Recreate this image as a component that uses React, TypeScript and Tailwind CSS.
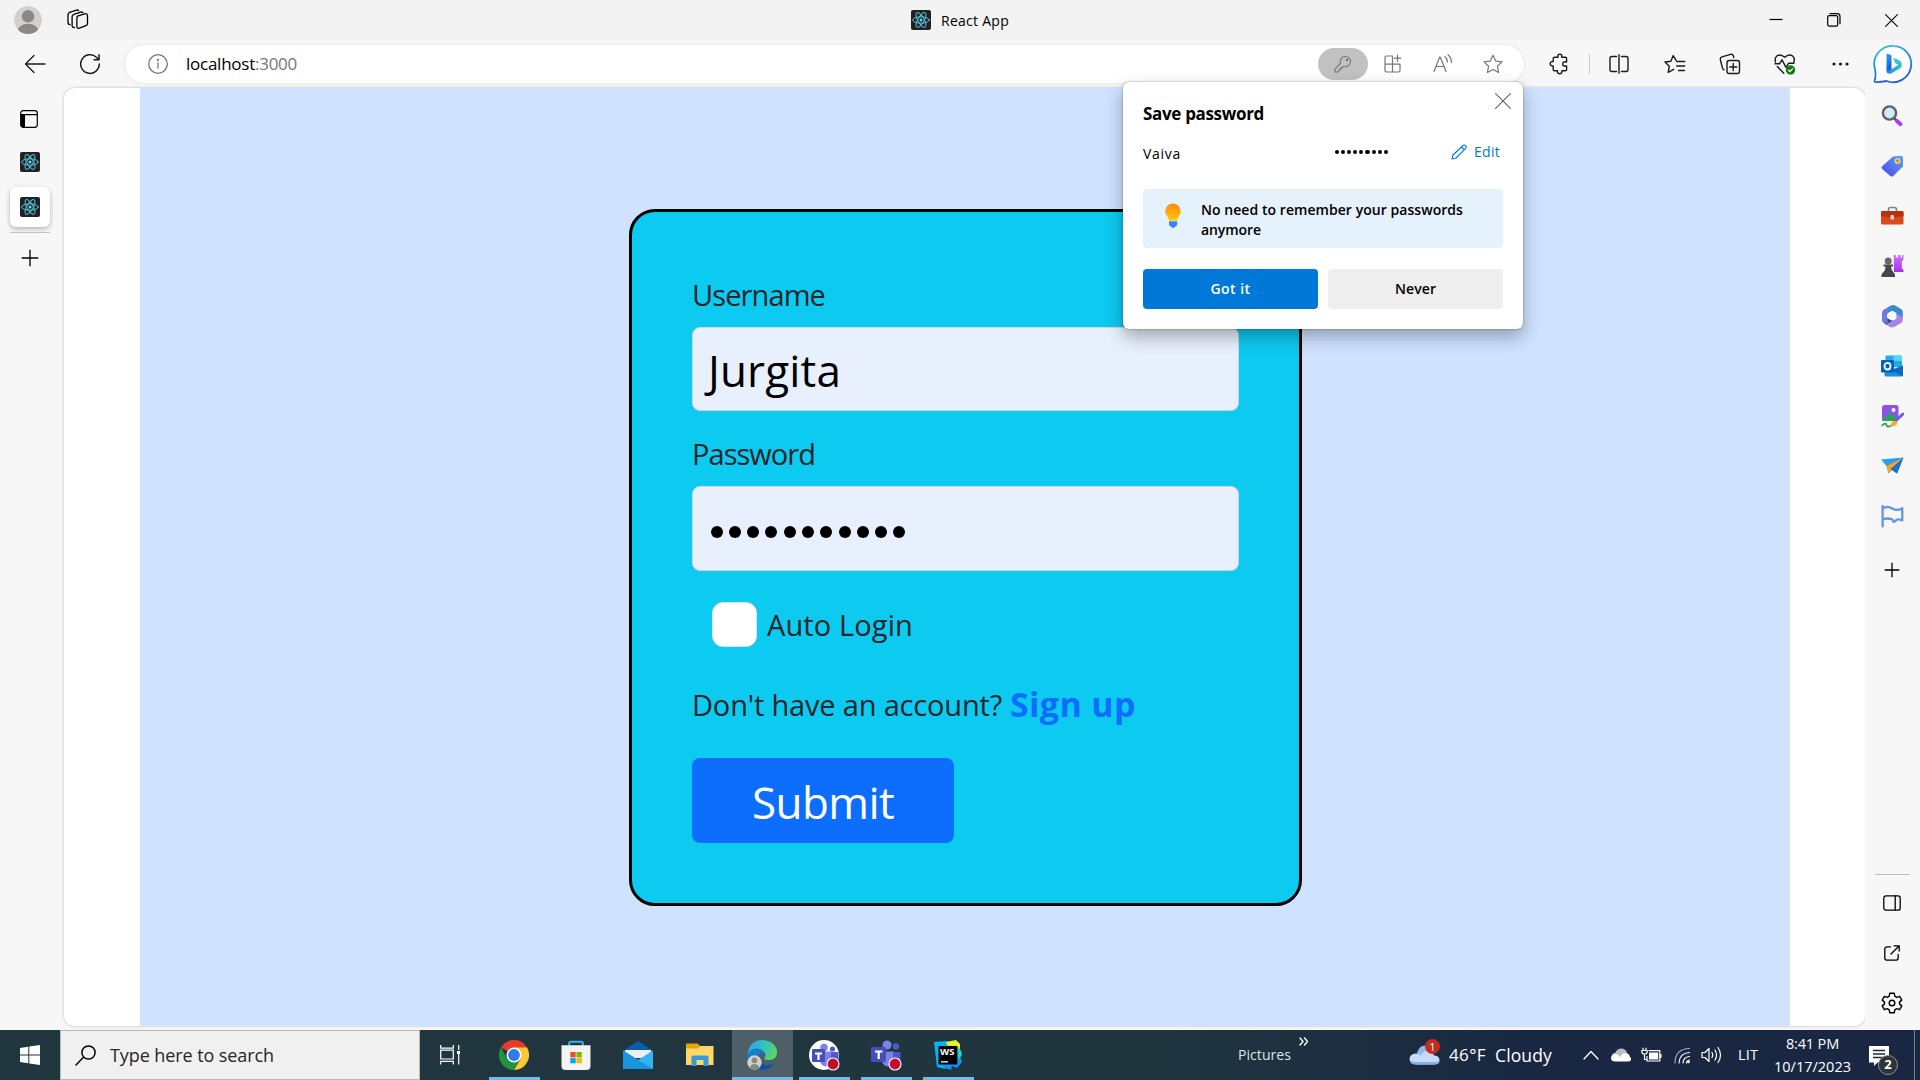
import { useLayoutEffect, useRef, useState, type ReactNode } from "react";

/** Single line of text whose tracking is adjusted so that it spans `width` pixels. */
function Fit({ children, width, className = "" }: { children: string; width: number; className?: string }) {
  const ref = useRef<HTMLSpanElement>(null);
  const [spacing, setSpacing] = useState(0);
  useLayoutEffect(() => {
    const el = ref.current;
    if (el) setSpacing((width - el.getBoundingClientRect().width) / children.length);
  }, [children, width]);
  return (
    <span ref={ref} className={`inline-block shrink-0 whitespace-pre ${className}`} style={{ letterSpacing: `${spacing}px` }}>
      {children}
    </span>
  );
}

type IconProps = { w?: number; h?: number; sw?: number; className?: string; children: ReactNode };
function Icon({ w = 20, h = 20, sw = 1.3, className = "", children }: IconProps) {
  return (
    <svg width={w} height={h} viewBox={`0 0 ${w} ${h}`} fill="none" stroke="currentColor" strokeWidth={sw} strokeLinecap="round" strokeLinejoin="round" className={`shrink-0 ${className}`}>
      {children}
    </svg>
  );
}

function ReactLogo() {
  return (
    <Icon sw={1} className="text-[#53c1de]">
      <rect width="20" height="20" rx="2" fill="#222" stroke="none" />
      <ellipse cx="10" cy="10" rx="8.3" ry="3.2" />
      <ellipse cx="10" cy="10" rx="8.3" ry="3.2" transform="rotate(60 10 10)" />
      <ellipse cx="10" cy="10" rx="8.3" ry="3.2" transform="rotate(120 10 10)" />
      <circle cx="10" cy="10" r="1.5" fill="#61dafb" stroke="none" />
    </Icon>
  );
}

function Cross({ size = 14, className = "" }: { size?: number; className?: string }) {
  return (
    <Icon w={size} h={size} sw={1.1} className={className}>
      <path d={`M.6.6 ${size - 0.6} ${size - 0.6}M${size - 0.6}.6.6 ${size - 0.6}`} />
    </Icon>
  );
}

function TitleBar() {
  return (
    <header className="relative flex h-10 shrink-0 items-center bg-[#f3f3f3] pl-3.5">
      <Icon w={28} h={28}>
        <clipPath id="avatar"><circle cx="14" cy="14" r="14" /></clipPath>
        <g clipPath="url(#avatar)" stroke="none">
          <circle cx="14" cy="14" r="14" fill="#d2d0ce" />
          <circle cx="14" cy="10.3" r="6.2" fill="#8a8886" />
          <ellipse cx="14" cy="25" rx="10.5" ry="7.2" fill="#8a8886" />
        </g>
      </Icon>
      <Icon w={22} h={22} sw={1.3} className="ml-[25px]">
        <path d="M10.5 7.2 17.6 4.8q2.900-.6 2.900 2v7.600q0 1.700-1.600 2.300l-6.600 2.500q-2.400.7-2.400-1.800V9.600q0-1.800.6-2.400Z" />
        <path d="M7.500 18.500q-2.400.1-2.400-2.200V7.800q0-1.800 1.800-2.400l6.800-2.300q1.400-.4 2.200.5" />
        <path d="M3 15.700q-2-.2-2-2.200V5.800Q1 4 2.700 3.400L9.500 1.100q1.300-.4 2.100.5" />
      </Icon>
      <div className="absolute left-[911px] top-2.5 flex h-5 items-center">
        <ReactLogo />
        <Fit width={68} className="ml-2.5 mt-px text-[14px] leading-5 text-black">React App</Fit>
      </div>
      <div className="ml-auto mr-[22px] flex items-center gap-11 text-black">
        <Icon w={14} h={14} sw={1.2}><path d="M.5 6.5h13" strokeLinecap="butt" /></Icon>
        <Icon w={14} h={14} sw={1.2}>
          <rect x=".7" y="2.7" width="10" height="10.5" rx="1.6" />
          <path d="M3 .7h7.200q2.800 0 2.800 2.800v7.200" />
        </Icon>
        <Cross size={13} />
      </div>
    </header>
  );
}

const STAR = "M10 1.3l2.700 5.800 6.300.8-4.600 4.300 1.200 6.300L10 15.400l-5.600 3.100 1.200-6.300L1 7.900l6.300-.8z";

function Cell({ children, className }: { children: ReactNode; className: string }) {
  return <div className={`flex h-full shrink-0 items-center justify-center ${className}`}>{children}</div>;
}

function AddressBar() {
  return (
    <div className="flex h-[38px] w-[1399px] shrink-0 items-center rounded-full bg-white pl-[23px] pr-1.5 text-[#767676] shadow-[0_0_3px_rgba(0,0,0,0.12)]">
      <Icon>
        <circle cx="10" cy="10" r="9.3" />
        <path d="M10 9v5" /><circle cx="10" cy="6" r=".5" fill="currentColor" />
      </Icon>
      <div className="ml-[18px] flex text-[17px] leading-6">
        <Fit width={69} className="text-black">localhost</Fit>
        <Fit width={42}>:3000</Fit>
      </div>
      <div className="ml-auto flex h-8 items-center">
        <Cell className="w-[50px] rounded-full bg-[#c1c1c1]">
          <Icon w={18} h={18} sw={1.1}>
            <path d="M6.600 8.300A5.100 5.100 0 1 1 9.800 11.400L8.600 12.600H7v1.800H5.200v1.700L4.200 17H1v-3z" />
            <circle cx="13" cy="5" r=".8" fill="currentColor" />
          </Icon>
        </Cell>
        <Cell className="w-[50px]">
          <Icon sw={1.2}>
            <path d="M9.500 2H3.400Q2 2 2 3.400v13.200Q2 18 3.400 18h12.200q1.400 0 1.400-1.400V10.200H2M9.500 2v16M14.500 1v6.500M11.300 4.200h6.500" />
          </Icon>
        </Cell>
        <Cell className="w-[50px]">
          <Icon sw={1.2}>
            <path d="M1 17.500 6.700 3h.5L13 17.500M3 12.500h8M12 2.700q2.300 2 2.500 5.300M15 .8q3.400 3 3.500 7.700" />
          </Icon>
        </Cell>
        <Cell className="w-[50px]"><Icon sw={1.2}><path d={STAR} /></Icon></Cell>
      </div>
    </div>
  );
}

function BingLogo() {
  return (
    <Icon w={40} h={40} className="relative z-10">
      <defs>
        <linearGradient id="bingRing" x1="0" y1="0" x2=".4" y2="1"><stop stopColor="#22c8f0" /><stop offset="1" stopColor="#2b59d8" /></linearGradient>
        <linearGradient id="bingB" x1="0" y1="0" x2=".3" y2="1"><stop stopColor="#2aa7f2" /><stop offset="1" stopColor="#1b4fd0" /></linearGradient>
        <linearGradient id="bingC" x1="1" y1="0" x2="0" y2="1"><stop stopColor="#39dccb" /><stop offset="1" stopColor="#2385ee" /></linearGradient>
      </defs>
      <path d="M20 1.800A18.200 18.200 0 1 1 13.500 37q-6 1.300-11 1.100Q1.200 38 1.700 36.500q1.400-4.500.4-11A18.200 18.200 0 0 1 20 1.800Z" fill="#fff" stroke="url(#bingRing)" strokeWidth="1.800" />
      <path d="M14 9.500l3.500 1.300q1 .4 1 1.600v13L14.500 29q-1-.8-1-2.500V10z" fill="url(#bingB)" stroke="none" />
      <path d="M13.500 26.500q1 4.500 5 2.700l8.300-4.700q2.500-1.700 2-4.500-.6-3.300-4-4.500l-4.700-1.600 2.300 5.400 3 1.500-7 4.400q-3 2.300-4.900 1.300z" fill="url(#bingC)" stroke="none" />
    </Icon>
  );
}

function Toolbar() {
  return (
    <div className="flex h-12 shrink-0 items-center bg-[#f7f7f7] text-[#1b1b1b]">
      <Icon w={22} className="ml-6"><path d="M21 10H2M10 1.500 1.500 10 10 18.500" /></Icon>
      <Icon w={22} h={22} sw={1.5} className="ml-[33px] mr-6">
        <path d="M20.300 11A9.300 9.300 0 1 1 17.400 4.300l2.200 2.200M20 1.800v5h-5" />
      </Icon>
      <AddressBar />
      <Cell className="ml-2.5 w-[51px]">
        <Icon w={21} h={22} sw={1.4}>
          <path d="M5.500 4.200H9q-.8-3 1.800-3t1.800 3h3.800q1.200 0 1.200 1.200V9q-4-.8-4 1.900t4 2v3.700q0 1.200-1.200 1.200h-3.500q.3 2.900-2.200 2.900t-2.300-2.900H5.500q-1.300 0-1.300-1.200v-3.600q-3 0-3-2.300t3-2.200V5.400q0-1.200 1.300-1.200Z" />
        </Icon>
      </Cell>
      <div className="ml-1 h-5 w-px bg-[#c8c8c8]" />
      <Cell className="w-[57px]">
        <Icon sw={1.4}>
          <path d="M7.500 2.500H3Q1 2.500 1 4.500v11q0 2 2 2h4.500M12.500 2.500H17q2 0 2 2v11q0 2-2 2h-4.500M10 .7v18.600" />
        </Icon>
      </Cell>
      <Cell className="w-[55px]">
        <Icon w={22} sw={1.4}>
          <path d="M12 6.300 9.200 1.500 6.900 7.200 1 8l4.300 4.200L4.200 18.300l5.500-3M12.700 7.500h8M12.700 12h8M14.500 16.500h6" />
        </Icon>
      </Cell>
      <Cell className="w-[55px]">
        <Icon w={22} h={22} sw={1.4}>
          <rect x="8" y="7.5" width="12.5" height="13" rx="2.2" />
          <path d="M14.200 10.500v7M10.700 14h7M5 16.800q-1.200-.4-1.500-1.700L1.300 6.500Q1 4.500 2.900 3.800l8.800-2.500q2-.4 2.700 1.500l.4 1.700" />
        </Icon>
      </Cell>
      <Cell className="w-[55px]">
        <Icon w={22} h={22} sw={1.4}>
          <path d="M1.500 9Q.3 5.300 2.800 3 6.500.3 10.700 4.300 15 .3 18.600 3q2.600 2.500 1.300 6M1 10.800h4.500L8 6.800l4 7.500 2.500-4H20M3.300 13.500l6.500 6.800" />
          <circle cx="16.500" cy="17" r="4.700" fill="#107c10" stroke="none" />
          <path d="M14.500 17.200l1.400 1.300 2.600-2.700" stroke="#fff" strokeWidth="1.2" />
        </Icon>
      </Cell>
      <Cell className="w-[55px]">
        <Icon h={6}><g fill="currentColor" stroke="none"><circle cx="4" cy="3" r="1.6" /><circle cx="10.5" cy="3" r="1.6" /><circle cx="17" cy="3" r="1.6" /></g></Icon>
      </Cell>
      <Cell className="w-[53px] pr-px"><BingLogo /></Cell>
    </div>
  );
}

function TabRail() {
  return (
    <nav className="flex w-16 shrink-0 flex-col items-center bg-[#f7f7f7] pr-1 pt-[22px] text-black">
      <Icon w={18} h={18} sw={1.2} className="mr-0.5">
        <rect x=".7" y=".7" width="16.6" height="16.6" rx="2.5" />
        <path d="M1 4.700h16" />
        <path d="M1 4.700h4V17H3q-2 0-2-2z" fill="currentColor" stroke="none" />
      </Icon>
      <div className="mt-6"><ReactLogo /></div>
      <div className="mt-[15px] flex size-10 items-center justify-center rounded-md bg-white shadow-[0_2px_5px_rgba(0,0,0,0.28)]"><ReactLogo /></div>
      <div className="mt-[5px] h-px w-10 bg-[#c4c4c4]" />
      <Icon w={18} h={18} className="mr-px mt-4"><path d="M9 .7v16.600M.7 9h16.600" strokeLinecap="butt" /></Icon>
    </nav>
  );
}

const SIDE_ICONS: ReactNode[] = [
  <g key="search" stroke="none">
    <path d="M13.500 13.500l2 2" stroke="#555" strokeWidth="2.5" />
    <path d="M16 16l3.500 3.200" stroke="#b13af2" strokeWidth="4" />
    <circle cx="8.5" cy="8" r="6.6" fill="#cfeafa" stroke="#5f6164" strokeWidth="2.4" />
  </g>,
  <g key="shopping" stroke="none">
    <path d="M12 1.500 20 .7q1.800 0 2 2v8.600L12.300 21q-1.500 1.200-3 0L1.200 14q-1.200-1.500 0-2.800z" fill="url(#sideBlue)" />
    <circle cx="16.5" cy="6" r="2.2" fill="#8a8cc0" stroke="#ffd33b" strokeWidth="1.6" />
  </g>,
  <g key="tools" stroke="none">
    <path d="M7.500 6.500v-2q0-2 2-2h4q2 0 2 2v2" fill="none" stroke="#85817e" strokeWidth="1.6" />
    <rect x="0" y="6" width="22.5" height="13.5" rx="1.5" fill="#dc4a1c" />
    <path d="M0 7.500Q0 6 1.500 6H21q1.500 0 1.500 1.500V11L13 12.500H9L0 11z" fill="#b5330d" />
    <rect x="9.5" y="10" width="3.5" height="4.5" rx="1" fill="#d8d4d0" />
  </g>,
  <g key="games" stroke="none">
    <path d="M12.700 0h2.200v2.500H17V0h2.500v2.500h1.500V0h1.500v4.500l-1.700 2V13l1.700 2v2h-9.500z" fill="url(#sidePurple)" />
    <circle cx="7.2" cy="6" r="3.5" fill="#66686b" />
    <path d="M2.500 9.500h9.500v2H10q.2 4 3 6.500 1.500 1.500 1 4H.5q-.5-2.500 1-4 3-2.500 3-6.500h-2z" fill="#45474a" />
  </g>,
  <g key="m365" stroke="none">
    <path d="M10.500.3 2.600 4.800Q1 6 1 8v7q0 2 1.600 3l3.500 2V9.800q0-1.500 1.500-2.300L15 3.500z" fill="#6d7bdd" />
    <path d="M11 .2q2-.4 4 .9l5 3q1.800 1.200 1.800 3v7L15.500 11V8L11 5.500 7 7.800V4q0-2 4-3.800z" fill="#358bd2" />
    <path d="M21.700 12v3.500q0 1.500-1.500 2.500L13 22q-2 .8-4 0L3 18q4 1 7-1l5.500-3.500V8.500z" fill="#a884e4" />
    <path d="M3 18q4 1 7-1l3-1.900-2.300.5-4.500-2.700v7z" fill="#36468e" />
    <path d="M11 7.200 14.700 9.300v4L11 15.500l-3.700-2.200v-4z" fill="#f7f7f7" />
  </g>,
  <g key="outlook" stroke="none">
    <path d="M5.500.5H20q1 0 1 1V12H4.500V1.500q0-1 1-1z" fill="#28a8ea" />
    <path d="M12.500.5H20q1 0 1 1V6h-8.500z" fill="#50d9ff" />
    <path d="M3.500 11.500 12 14l10-3.500V20q0 1.500-1.500 1.500H5q-1.500 0-1.500-1.500z" fill="#1490df" />
    <path d="M11 15.500l11 6V10.500z" fill="#0f6cbd" />
    <rect x="0" y="5" width="13" height="12.5" rx="1" fill="#0364b8" />
    <ellipse cx="6.5" cy="11.2" rx="3" ry="3.3" fill="none" stroke="#fff" strokeWidth="1.8" />
  </g>,
  <g key="designer" stroke="none">
    <rect x="1" y="0" width="16.5" height="16" rx="2.5" fill="#8d52e8" />
    <circle cx="12.5" cy="5" r="2" fill="#fff" />
    <path d="M1 14.500 7.500 8.800q1.500-1 3 0L16 14l-2 2H3q-2 0-2-1.500z" fill="#28a35d" />
    <path d="M1 20.500q4-3.500 4.500-.5t5 .5" fill="none" stroke="#2c9950" strokeWidth="1.6" />
    <path d="M15 15.500l7-6.500" stroke="#675bea" strokeWidth="3" />
    <path d="M9.500 21.500q0-5.500 4-5.500t2.300 3.500q-2 2.300-6.300 2z" fill="#f5ad21" />
  </g>,
  <g key="drop" stroke="none">
    <path d="M0 4.500 22.500 2.500 16 18.500 11 15l-3.500 3.500-2-7.500z" fill="#2a9df0" />
    <path d="M5.500 11 22.500 2.500 11 15l-3.500 3.500z" fill="#f4a71c" />
    <path d="M22.500 2.500 16 18.500 9.500 14z" fill="#1c73cf" />
  </g>,
  <g key="flag" stroke="#6097e4" strokeWidth="2.3" fill="none">
    <path d="M1.600 1v20.500M1.600 3.500q5-3 9.700 0t10-.3v12.300q-5-2.300-7 .5-2.500 2-2.800-1.500-5-2-9.900 0" />
  </g>,
];

function SideBar() {
  return (
    <aside className="flex w-[55px] shrink-0 flex-col items-center bg-[#f7f7f7] pr-px pt-[3px] text-black">
      <svg width="0" height="0">
        <defs>
          <linearGradient id="sideBlue" x1="1" y1="0" x2="0" y2="1"><stop stopColor="#58a5fa" /><stop offset="1" stopColor="#4f46e8" /></linearGradient>
          <linearGradient id="sidePurple" x1="0" y1="0" x2="0" y2="1"><stop stopColor="#d174fb" /><stop offset="1" stopColor="#a62cf2" /></linearGradient>
        </defs>
      </svg>
      {SIDE_ICONS.map((shape, i) => (
        <div key={i} className="flex h-[50px] items-center"><Icon w={23} h={23}>{shape}</Icon></div>
      ))}
      <Icon w={16} h={16} className="mt-[21px]"><path d="M8 .7v14.600M.7 8h14.600" strokeLinecap="butt" /></Icon>
      <div className="mt-auto h-px w-[35px] bg-[#bdbdbd]" />
      <Icon w={18} h={16} className="mt-5"><rect x=".8" y=".8" width="16.4" height="14.4" rx="2.2" /><path d="M12.200 1v14" /></Icon>
      <Icon w={16} h={16} className="mt-[34px]"><path d="M6.500 1.800H3.300Q.8 1.800.8 4.300v8.400q0 2.500 2.500 2.500h8.400q2.500 0 2.500-2.500V9.500M10 .8h5.200V6M15 1 7 9" /></Icon>
      <Icon w={22} h={22} sw={1.4} className="mb-4 mt-[31px]">
        <path d="M8.800 1.200h4.400l.6 3 1.900 1.100 2.900-1 2.200 3.800-2.300 2v1.800l2.300 2-2.200 3.800-2.900-1-1.900 1.100-.6 3H8.800l-.6-3-1.900-1.100-2.900 1-2.200-3.800 2.300-2v-1.800l-2.300-2 2.200-3.800 2.900 1 1.900-1.100z" />
        <circle cx="11" cy="11" r="2.8" />
      </Icon>
    </aside>
  );
}

function LoginCard() {
  return (
    <form className="ml-0.5 mt-[121px] flex h-[697px] w-[673px] flex-col items-start rounded-[26px] border-[3px] border-black bg-[#0dcaf0] px-[60px] pt-[60px] text-[29px] text-[#212529]">
      <Fit width={133} className="h-[45px] leading-[45px]">Username</Fit>
      <div className="mt-2.5 h-[84px] w-full rounded-lg border border-[#ced4da] bg-[#e8f0fe] pl-[15px] text-black">
        <Fit width={133} className="text-[44px] leading-[84px]">Jurgita</Fit>
      </div>
      <Fit width={123} className="mt-5 h-[45px] leading-[45px]">Password</Fit>
      <div className="mt-2.5 flex h-[85px] w-full items-center gap-[6.3px] rounded-lg border border-[#ced4da] bg-[#e8f0fe] pl-[17.5px] pt-[7px]">
        {Array.from({ length: 11 }, (_, i) => <span key={i} className="size-3 rounded-full bg-black" />)}
      </div>
      <div className="ml-5 mt-[31px] flex h-[45px] items-center">
        <span className="size-[45px] rounded-[11px] border border-[#dee2e6] bg-white" />
        <Fit width={146} className="ml-2.5 leading-[43px]">Auto Login</Fit>
      </div>
      <p className="mt-[35px] flex h-[45px] items-center leading-[45px]">
        <Fit width={310}>Don't have an account?</Fit>
        <Fit width={126} className="ml-2 text-[34px] font-bold leading-[43px] text-[#0d6efd]">Sign up</Fit>
      </p>
      <div className="mt-[31px] flex h-[85px] w-[262px] items-center justify-center rounded-lg bg-[#0d6efd] text-white">
        <Fit width={142} className="mt-[3px] text-[44px] leading-[82px]">Submit</Fit>
      </div>
    </form>
  );
}

function SavePassword() {
  return (
    <section className="absolute left-[1123px] top-[82px] h-[247px] w-[400px] rounded-md bg-white px-5 text-[14px] text-black shadow-[0_0_2px_rgba(0,0,0,0.45),0_8px_18px_rgba(0,0,0,0.3)]">
      <Cross size={16} className="absolute right-3 top-[11px] text-[#5f6368]" />
      <h2 className="mt-5 flex h-6 text-[17px] font-bold leading-6"><Fit width={121}>Save password</Fit></h2>
      <div className="mt-[15px] flex h-6 items-center">
        <Fit width={38}>Vaiva</Fit>
        <span className="ml-[154px] flex items-center gap-0.5 pb-0.5">
          {Array.from({ length: 9 }, (_, i) => <span key={i} className="size-[4.1px] rounded-full bg-black" />)}
        </span>
        <span className="ml-auto mr-[3px] flex items-center pb-[3px] text-[#0078d4]">
          <Icon w={16} h={16} sw={1.1}><path d="M1 15l1-4L12 1.500q1.300-1 2.500.2t.2 2.600L5 14zM10.500 3l2.700 2.700" /></Icon>
          <Fit width={26} className="ml-[7px]">Edit</Fit>
        </span>
      </div>
      <div className="mt-6 flex h-[59px] rounded bg-[#e5f1fb] pl-[22px] pt-[11px]">
        <svg width="16" height="26" viewBox="0 0 16 26" className="mt-[3px] shrink-0">
          <defs><linearGradient id="bulb" x1="0" y1="0" x2="0" y2="1"><stop stopColor="#fb8a14" /><stop offset="1" stopColor="#ffcb0a" /></linearGradient></defs>
          <path d="M8 .5a7.800 7.800 0 0 1 7.800 7.800q0 2.700-2 5-1.300 2-1.700 4.200H4q-.4-2.200-1.800-4.200-2-2.300-2-5A7.800 7.800 0 0 1 8 .5z" fill="url(#bulb)" />
          <path d="M4 18.300h8.200v3q0 1-1 1.700L8 25.300 5 23q-1-.7-1-1.700z" fill="#3b82f6" />
        </svg>
        <p className="ml-5 flex flex-col items-start font-semibold leading-5">
          <Fit width={262}>No need to remember your passwords</Fit>
          <Fit width={60}>anymore</Fit>
        </p>
      </div>
      <div className="mt-[21px] flex gap-2.5 font-semibold">
        <button className="flex h-10 w-[175px] items-center justify-center rounded-sm bg-[#0078d7] pb-0.5 text-white"><Fit width={40}>Got it</Fit></button>
        <button className="flex h-10 w-[175px] items-center justify-center rounded-sm bg-[#eee] pb-0.5"><Fit width={41}>Never</Fit></button>
      </div>
    </section>
  );
}

function TeamsGlyph({ round }: { round?: boolean }) {
  return (
    <Icon w={32} h={32}>
      <g stroke="none">
        {round && <circle cx="16" cy="16" r="15" fill="#fff" />}
        <circle cx={round ? 16 : 17} cy={round ? 8.5 : 6} r={round ? 3.8 : 4.5} fill="#7b83eb" />
        <circle cx={round ? 24.5 : 26} cy={round ? 10 : 7.5} r={round ? 2.6 : 3.2} fill="#5059c9" />
        <path d="M12 12.500h12V22q-1 5-6 5.500-5-.5-6-5.500z" fill="#7b83eb" />
        <path d="M23 13h7.500v7q-1 5-5.500 4.500L23 24z" fill="#5059c9" />
        <rect x={round ? 4 : 1} y={round ? 10 : 8} width={round ? 13 : 15} height={round ? 13 : 15} rx="1.3" fill="#464eb8" />
        <path d={round ? "M7 13.500h7v2h-2.400V21h-2.200v-5.500H7z" : "M5 11.500h7.500v2h-2.700V20H7.600v-6.500H5z"} fill="#fff" />
        <circle cx="25" cy="25" r="6" fill="#c50f2d" stroke="#fff" strokeWidth="1.1" />
      </g>
    </Icon>
  );
}

type App = { name: string; open?: boolean; active?: boolean; art: ReactNode };
const APPS: App[] = [
  {
    name: "Chrome", open: true,
    art: (
      <Icon w={30} h={30}><g stroke="none">
        <path d="M15 15 2 7.500A15 15 0 0 1 28 7.500z" fill="#e33b2e" />
        <path d="M15 7.500h13A15 15 0 0 1 15 30l6.500-11.200z" fill="#fcc934" />
        <path d="M21.500 18.800 15 30A15 15 0 0 1 2 7.500l6.500 11.300z" fill="#229342" />
        <circle cx="15" cy="15" r="7.5" fill="#fff" /><circle cx="15" cy="15" r="5.9" fill="#2f7bea" />
      </g></Icon>
    ),
  },
  {
    name: "Store",
    art: (
      <Icon w={30} h={30}><g stroke="none">
        <path d="M8.200 6V3.500q0-1.700 1.700-1.700h10.200q1.700 0 1.700 1.700V6" fill="none" stroke="#33b3ec" strokeWidth="2" />
        <path d="M.5 5.200h29V26q0 4-4 4h-21q-4 0-4-4z" fill="#f3f3f3" />
        <path d="M9.300 12h5.400v5.400H9.300z" fill="#f25022" /><path d="M15.400 12h5.400v5.400h-5.400z" fill="#7fba00" />
        <path d="M9.300 18.100h5.400v5.200H9.300z" fill="#00a4ef" /><path d="M15.400 18.100h5.400v5.200h-5.400z" fill="#ffb900" />
      </g></Icon>
    ),
  },
  {
    name: "Mail",
    art: (
      <Icon w={30} h={30}><g stroke="none">
        <path d="M0 11 13.500 1.700q1.500-1 3 0L30 11z" fill="#0b5cab" />
        <path d="M2 10h26v8H2z" fill="#efefef" />
        <path d="M0 10.500 15 20l15-9.500V29H0z" fill="#31b4f0" />
        <path d="M0 10.500 30 29H0z" fill="#1c93df" />
      </g></Icon>
    ),
  },
  {
    name: "Explorer",
    art: (
      <Icon w={28} h={30}><g stroke="none">
        <path d="M0 4.500Q0 3.500 1 3.500h11l2 2.500v6H0z" fill="#e5a50a" />
        <path d="M0 8.500h12L14 6h13.500V25H0z" fill="#ffd866" />
        <path d="M5.500 26V17q0-1.500 1.500-1.500h14q1.500 0 1.500 1.500v9h-5v-6h-7v6z" fill="#3b98dd" />
      </g></Icon>
    ),
  },
  {
    name: "Edge", open: true, active: true,
    art: (
      <Icon w={30} h={30}>
        <defs>
          <linearGradient id="edgeTop" x1="0" y1=".3" x2="1" y2=".6"><stop stopColor="#2aa8e6" /><stop offset=".6" stopColor="#36c6b4" /><stop offset="1" stopColor="#62d75a" /></linearGradient>
        </defs>
        <g stroke="none">
          <path d="M1 12Q3.500.3 15 0 28 .5 30 11q.5 8-7 9-5 .3-6-1.800 2.500-2 .8-5.200Q13 8 5 12q-3 2-4.500 5z" fill="url(#edgeTop)" />
          <path d="M.3 16Q2 8.500 9.500 8.500q7 .3 8.300 5-4-1.500-6 1.500-2.500 6 4.500 9.500 5 2 11-1Q22 30.500 14 30 1 28 .3 16z" fill="#167cc8" />
          <path d="M11.500 15.500q-2.500 6 4.800 9 5.200 2 11-1Q22 30.500 14 30 6 25 11.500 15.500z" fill="#124f9c" />
          <circle cx="7.5" cy="22.5" r="7.2" fill="#d2d0ce" /><circle cx="7.5" cy="20.3" r="2.9" fill="#8a8886" />
          <path d="M2.800 27.600q.7-3.600 4.700-3.600t4.700 3.600q-4.700 3.700-9.400 0z" fill="#8a8886" />
        </g>
      </Icon>
    ),
  },
  { name: "Teams", open: true, art: <TeamsGlyph round /> },
  { name: "Teams personal", open: true, art: <TeamsGlyph /> },
  {
    name: "WebStorm", open: true,
    art: (
      <div className="relative flex size-[30px] items-center justify-center">
        <Icon w={30} h={30}><g stroke="none">
          <path d="M1 2l13-1 4 5-6 23-8-2z" fill="#08b4f0" />
          <path d="M13 2l10-2 4 4v7l-10 1z" fill="#e4ee35" />
          <path d="M25 8l4 4-2 4 2 6-5 6-5-2-1 4-9-3z" fill="#1591f4" />
          <path d="M22 5l5 4 2 6-3 4z" fill="#20d5c0" />
          <path d="M5.500 6h18.800v18.500H5.500z" fill="#000" />
          <path d="M8 21.200h7v1.300H8z" fill="#fff" />
        </g></Icon>
        <span className="absolute left-[7px] top-[7px] text-[9.5px] font-bold leading-[9px] text-white">WS</span>
      </div>
    ),
  },
];

function Tray() {
  return (
    <div className="ml-auto flex h-full items-center text-white">
      <Fit width={53} className="mb-0.5 text-[14px] text-[#dfe4e8]">Pictures</Fit>
      <Icon w={10} h={9} sw={1.4} className="-mt-[27px] ml-2"><path d="M1 1l3 3.500-3 3.500M5.500 1l3 3.500-3 3.500" /></Icon>
      <div className="relative ml-[100px]">
        <Icon w={31} h={22}><g stroke="none">
          <path d="M8 12Q8 2 16 1.500q6 0 7.500 7z" fill="#8fb6ef" />
          <path d="M7 20.500q-6.500-.5-6.500-5.500T7 9.500q3 0 4.500 2Q14 6.500 19 7q5 .6 6 4.500 5.500.2 5.500 4.700T25 20.500z" fill="#c6dafa" />
          <path d="M1 16q0 4.500 6 4.500h18q5 0 5.500-4-2 1.500-5.500 1.500H7q-4.500 0-6-2z" fill="#86aeea" />
        </g></Icon>
        <span className="absolute -top-[5px] right-0 flex size-[15px] items-center justify-center rounded-full bg-[#c42b1c] text-[11px] leading-none">1</span>
      </div>
      <Fit width={37} className="ml-[9px] text-[17px]">46°F</Fit>
      <Fit width={57} className="ml-[9px] text-[17.5px]">Cloudy</Fit>
      <Icon w={16} h={10} className="ml-[31px]"><path d="M1 9l7-7.500L15 9" /></Icon>
      <Icon w={20} h={14} className="ml-3"><g stroke="none">
        <path d="M1 9q-.5-4 3.500-4.500Q6 .5 10.500.5q4 .3 5.500 4l-6 5z" fill="#b9bdc2" />
        <path d="M4.500 13.500Q0 13.500 0 10t4.500-4q2.500 0 5 3Q11 5 15 5q3.500.5 3.700 3.500Q20 9.300 20 11q0 2.500-3 2.500z" fill="#fff" />
      </g></Icon>
      <Icon w={21} h={16} sw={1.2} className="ml-2.5">
        <path d="M7.500 3.700h11.300V14H6V9M19.900 7v4M2 .8v2.500M5 .8v2.500M.8 3.500h5.400v2L4.700 7H2.300L.8 5.500zM3.500 7v5.500H6" strokeLinecap="butt" />
        <path d="M8 5.500h9.200v7H8z" fill="currentColor" stroke="none" />
      </Icon>
      <Icon w={17} h={17} sw={1.2} className="ml-3">
        <path d="M1 16Q1 2 15.500 1.500" className="opacity-60" />
        <path d="M5 16Q5.500 6 15.500 5.500M9 16q.3-6 6.500-6.500" /><path d="M12.500 16q0-2.500 3-3" /><circle cx="14.500" cy="15" r="1.3" fill="currentColor" stroke="none" />
      </Icon>
      <Icon w={21} h={18} sw={1.2} className="ml-2.5">
        <path d="M1 6.500h3L8 2.500v13L4 11.500H1zM11 6.500q1.300 2.500 0 5M14 4q3 5 0 10M17 1.500q5 7.500 0 15" />
      </Icon>
      <Fit width={20} className="ml-4 text-[14.5px]">LIT</Fit>
      <div className="ml-4 flex w-[77px] flex-col items-center text-[14.5px] leading-[23px]">
        <Fit width={53}>8:41 PM</Fit>
        <Fit width={77}>10/17/2023</Fit>
      </div>
      <div className="relative ml-[18px] mr-[25px]">
        <Icon w={20} h={21}><path d="M0 1h20v16.500H8.500L5 21v-3.500H0z" fill="#fff" stroke="none" /><path d="M4 5.500h12M4 9h12M4 12.500h12" stroke="#1a2843" strokeLinecap="butt" /></Icon>
        <span className="absolute left-[9px] top-2.5 flex size-5 items-center justify-center rounded-full border border-[#8e9299] bg-[#2f3338] text-[13px] font-bold leading-none">2</span>
      </div>
      <div className="mr-[5px] h-full w-px bg-[#78808e]" />
    </div>
  );
}

function Taskbar() {
  return (
    <footer className="flex h-[50px] shrink-0 items-center bg-linear-to-r from-[#21363f] via-[#20353e] via-60% to-[#192742] to-80%">
      <div className="flex w-[60px] shrink-0 justify-center">
        <Icon w={20} h={20}><path d="M0 3l8.300-1.200v7.700H0zM9.300 1.600 20 0v9.500H9.300zM0 10.500h8.300v7.700L0 17zM9.300 10.500H20V20L9.300 18.400z" fill="#fff" stroke="none" /></Icon>
      </div>
      <div className="flex h-full w-[360px] shrink-0 items-center border border-[#b8b8b8] bg-[#f0f0f0] pl-3.5 text-[#262626]">
        <Icon w={21} h={21} sw={1.5} className="text-black"><circle cx="13.500" cy="7.5" r="6.6" /><path d="M8.500 12.200 1 20" /></Icon>
        <Fit width={164} className="ml-3.5 text-[18px]">Type here to search</Fit>
      </div>
      <Icon w={20} h={20} sw={1.2} className="ml-5 mr-[23px] text-white">
        <path d="M.7 0v3.200h12.600V0M.7 19.500v-3.200h12.600v3.200M.7 5.200h12.600v8.800H.7zM18.700 0v5M18.700 9v10.500" strokeLinecap="butt" strokeLinejoin="miter" /><path d="M17 6h3v3h-3z" fill="currentColor" stroke="none" />
      </Icon>
      {APPS.map((app) => (
        <div key={app.name} className="flex h-full w-[62px] shrink-0 justify-center">
          <div className={`flex h-full shrink-0 flex-col items-center ${app.active ? "w-[61px] bg-[#4f5f67]" : "w-[51px]"}`}>
            <div className="flex h-[47px] items-center pt-[3px]">{app.art}</div>
            {app.open && <div className="h-[3px] w-full bg-[#76b9ed]" />}
          </div>
        </div>
      ))}
      <Tray />
    </footer>
  );
}

export default function App() {
  return (
    <div className="relative flex h-[1080px] w-[1920px] flex-col overflow-hidden bg-[#f7f7f7] font-['Open_Sans','Noto_Sans',sans-serif]">
      <TitleBar />
      <Toolbar />
      <div className="flex min-h-0 flex-1">
        <TabRail />
        <main className="mb-1 flex flex-1 justify-center overflow-hidden rounded-[11px] bg-white shadow-[0_0_3px_rgba(0,0,0,0.25)]">
          <div className="flex w-[1650px] justify-center bg-[#cfe2ff]"><LoginCard /></div>
        </main>
        <SideBar />
      </div>
      <Taskbar />
      <SavePassword />
    </div>
  );
}
